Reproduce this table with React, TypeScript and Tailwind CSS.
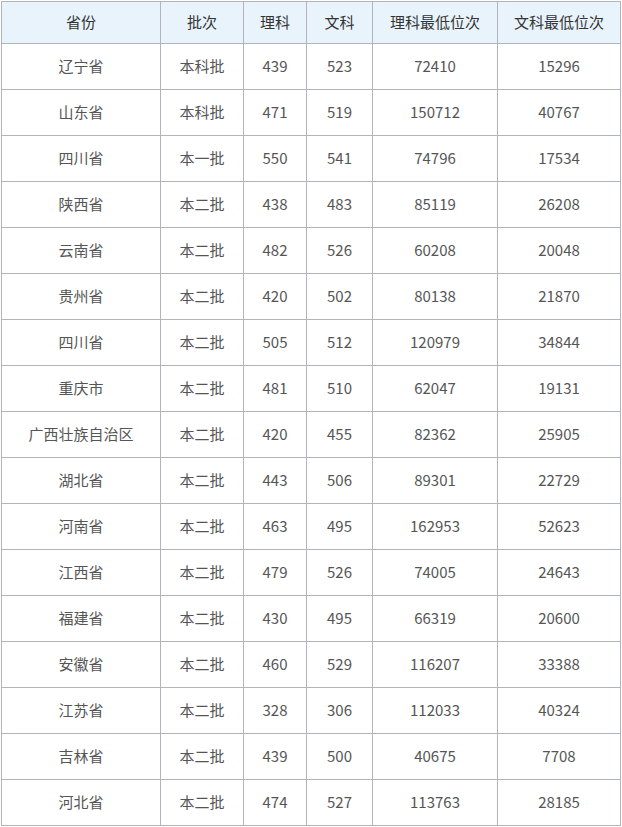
import React from 'react';

const rows = [
  ['辽宁省', '本科批', '439', '523', '72410', '15296'],
  ['山东省', '本科批', '471', '519', '150712', '40767'],
  ['四川省', '本一批', '550', '541', '74796', '17534'],
  ['陕西省', '本二批', '438', '483', '85119', '26208'],
  ['云南省', '本二批', '482', '526', '60208', '20048'],
  ['贵州省', '本二批', '420', '502', '80138', '21870'],
  ['四川省', '本二批', '505', '512', '120979', '34844'],
  ['重庆市', '本二批', '481', '510', '62047', '19131'],
  ['广西壮族自治区', '本二批', '420', '455', '82362', '25905'],
  ['湖北省', '本二批', '443', '506', '89301', '22729'],
  ['河南省', '本二批', '463', '495', '162953', '52623'],
  ['江西省', '本二批', '479', '526', '74005', '24643'],
  ['福建省', '本二批', '430', '495', '66319', '20600'],
  ['安徽省', '本二批', '460', '529', '116207', '33388'],
  ['江苏省', '本二批', '328', '306', '112033', '40324'],
  ['吉林省', '本二批', '439', '500', '40675', '7708'],
  ['河北省', '本二批', '474', '527', '113763', '28185'],
];

const headers = ['省份', '批次', '理科', '文科', '理科最低位次', '文科最低位次'];

const App = () => {
  return (
    <div className="min-h-screen bg-white pt-px pl-px" style={{ fontFamily: '"Noto Sans CJK SC", "Noto Sans", sans-serif' }}>
      <div className="grid w-[620px] grid-cols-[158px_82px_62px_65px_124px_122px] gap-px bg-[#b3b3be] p-px text-[15px]">
        {headers.map((h) => (
          <div key={h} className="flex h-[41px] items-center justify-center bg-[#e8f3fc] text-[#333]">
            {h}
          </div>
        ))}
        {rows.map((r, i) =>
          r.map((c, j) => (
            <div key={`${i}-${j}`} className="flex h-[45px] items-center justify-center bg-white text-[#555]">
              {c}
            </div>
          ))
        )}
      </div>
    </div>
  );
};

export default App;
